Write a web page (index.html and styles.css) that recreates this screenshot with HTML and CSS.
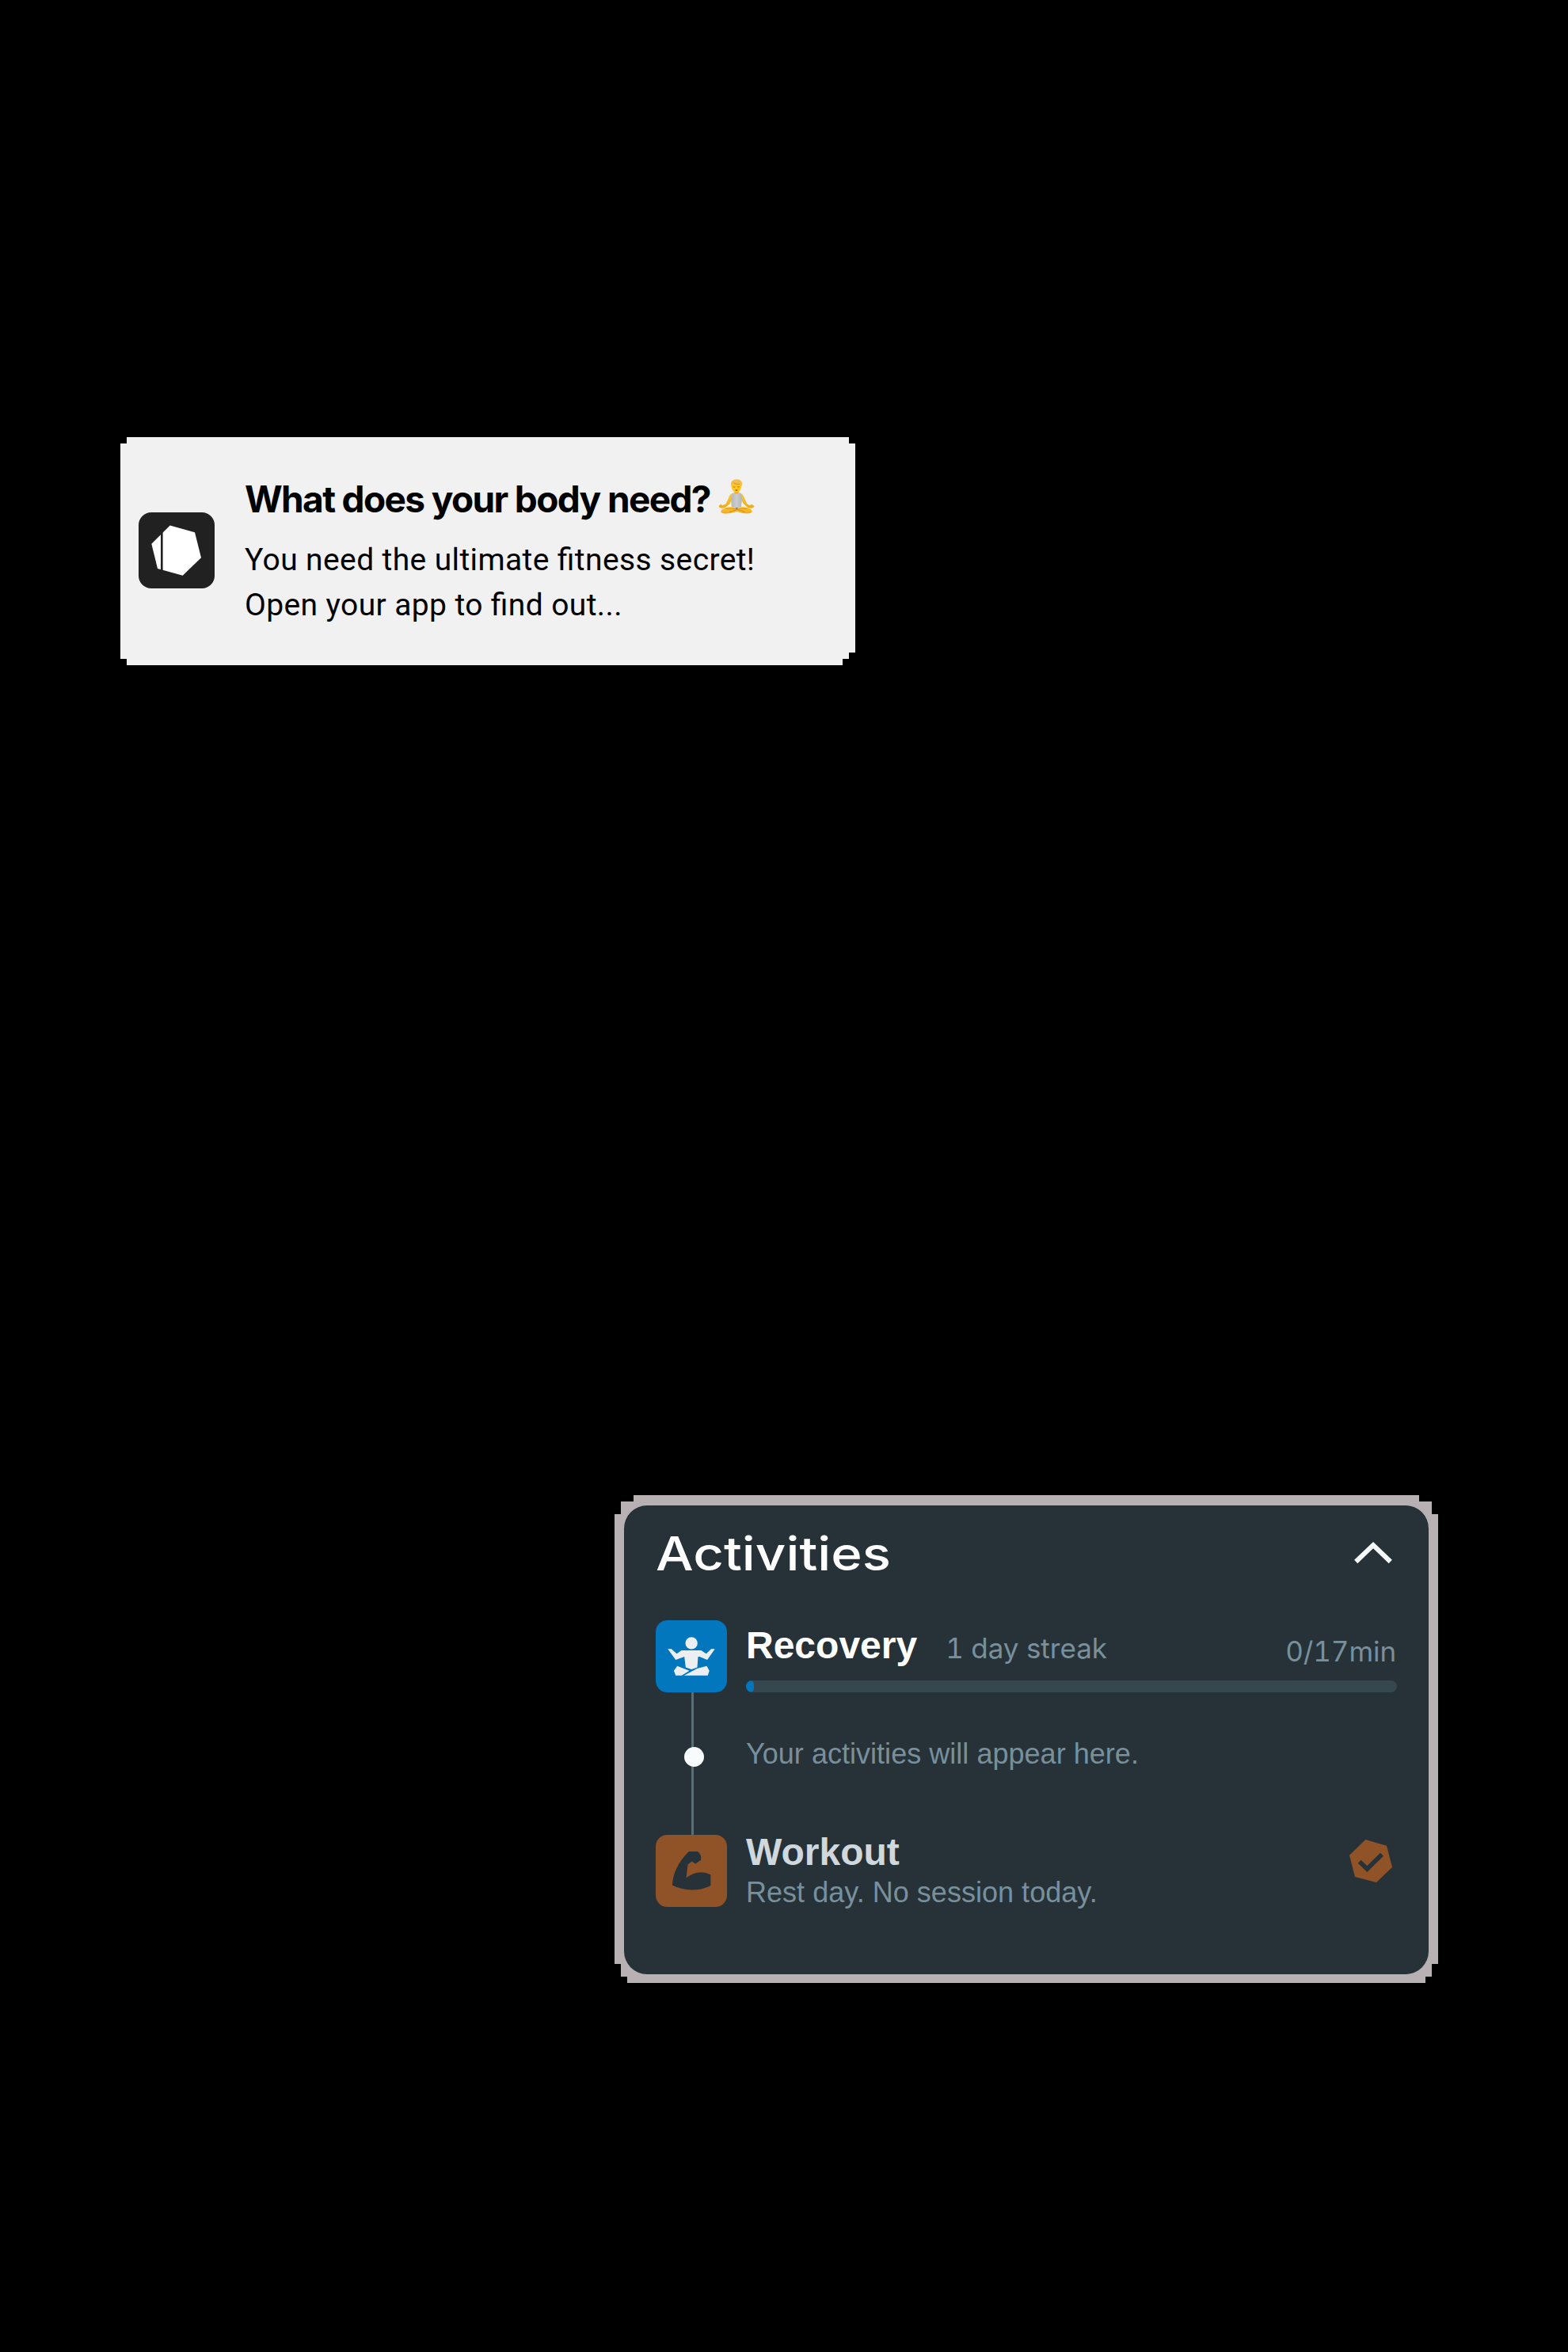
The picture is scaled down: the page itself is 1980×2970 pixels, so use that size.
FILE: index.html
```html
<!DOCTYPE html>
<html lang="en">
<head>
<meta charset="utf-8">
<title>Activities</title>
<link rel="stylesheet" href="styles.css">
</head>
<body>
<main class="page">
  <section class="notice">
    <svg class="app-icon" viewBox="0 0 96 96">
      <rect width="96" height="96" rx="16" fill="#212121"/>
      <path d="M39.7 16.6 71 25.3 79 57.2 55.7 79.7 24 71 16.3 39.8Z" fill="#fff"/>
      <path d="M29.3 15V78" stroke="#212121" stroke-width="2.6"/>
    </svg>
    <div class="notice-text">
      <h2 class="notice-title"><span>What does your body need?</span>
        <svg class="emoji" viewBox="48 42 138 132">
          <defs>
            <linearGradient id="skin" x1="0" y1="0" x2="0" y2="1"><stop offset="0" stop-color="#fccb35"/><stop offset="1" stop-color="#efa91c"/></linearGradient>
            <linearGradient id="shirt" x1="0" y1="0" x2="1" y2="0"><stop offset="0" stop-color="#b4b6bb"/><stop offset=".5" stop-color="#cbccd0"/><stop offset="1" stop-color="#b4b6ba"/></linearGradient>
          </defs>
          <path d="M109 84h16v14h-16z" fill="#e9a51d"/>
          <path d="M104 95C94 97 89 104 87 114L77 136 64 142 58 137 51 142 50 148 60 152 75 149 91 136 101 118H133L144 136 160 150 174 152 185 147 181 141 174 137 167 142 157 136 147 114C144 103 139 97 129 95L117 101Z" fill="url(#skin)"/>
          <path d="M101 96 109 93Q117 103 126 93L135 96 138 118 134 152H99L96 117Z" fill="url(#shirt)"/>
          <path d="M100 147C82 146 60 153 58 164 58 173 77 174 95 171L118 165 140 171C158 174 176 173 176 163 174 153 153 146 135 147L117 152Z" fill="url(#skin)"/>
          <path d="M76 154Q99 151 120 157L149 166M158 154Q133 152 119 158L89 166" fill="none" stroke="#cf8519" stroke-width="2.4"/>
          <path d="M112 151h12l-6 4z" fill="#555c66"/>
          <path d="M98 58C95 64 98 70 99 76 101 87 109 92 117 93 126 91 133 86 134 75 138 69 136 61 133 57Z" fill="#ffc61d"/>
          <path d="M97 66C93 53 102 44 117 43 134 42 142 54 137 67L132 61 119 62 104 57Z" fill="#f6be4c"/>
          <path d="M104 56Q113 62 129 61" fill="none" stroke="#b9782a" stroke-width="2"/>
          <path d="M105 71q4 3 7 0M121 71q4 3 7 0" fill="none" stroke="#76501a" stroke-width="2"/>
          <ellipse cx="117" cy="84" rx="5" ry="2.2" fill="#a94b2c"/>
        </svg>
      </h2>
      <p class="notice-body">You need the ultimate fitness secret!<br>Open your app to find out...</p>
    </div>
  </section>

  <section class="frame">
    <div class="panel">
      <header class="panel-head">
        <h1 class="panel-title">Activities</h1>
        <svg class="chevron" viewBox="0 0 48 28"><path d="M2.2 25 24 4.2 45.8 25" fill="none" stroke="#f5f9fa" stroke-width="6"/></svg>
      </header>

      <div class="row row-recovery">
        <svg class="tile" viewBox="39 34 271 271" preserveAspectRatio="none">
          <rect x="39" y="34" width="271" height="271" rx="44" fill="#0277bd"/>
          <g fill="#eceff1">
            <circle cx="175" cy="120" r="23"/>
            <path d="M85 142H99L119 160 137 147H212L231 160 250 142H264L235 183 206 171 200 171 197 211 175 219 153 211 148 171 115 183Z"/>
            <path d="M121 206 167 224 138 242H115L108 224ZM147 242 196 216 233 206 243 224 237 242Z"/>
          </g>
        </svg>
        <div class="recovery-main">
          <div class="recovery-head">
            <h2 class="name">Recovery</h2>
            <span class="streak">1 day streak</span>
            <span class="time">0/17min</span>
          </div>
          <div class="bar"><div class="bar-fill" style="width:10px"></div></div>
        </div>
      </div>

      <div class="row row-empty">
        <div class="rail"><span class="dot"></span></div>
        <p class="muted">Your activities will appear here.</p>
      </div>

      <div class="row row-workout">
        <svg class="tile" viewBox="39 36 271 272" preserveAspectRatio="none">
          <rect x="39" y="36" width="271" height="272" rx="44" fill="#905327"/>
          <path d="M165 99H199Q208 107 211 116L211 131 190 145 176 136 161 148 155 199Q180 178 211 177 230 177 248 186L248 227Q216 244 176 244 135 243 102 226 105 158 165 99Z" fill="#263238"/>
        </svg>
        <div class="workout-text">
          <h2 class="name name-dim">Workout</h2>
          <p class="muted">Rest day. No session today.</p>
        </div>
        <svg class="badge" viewBox="72 69 162 162">
          <path d="M133 69 213 92 234 173 174 231 93 210 72 128Z" fill="#905327"/>
          <path d="M110 152 139 180 195 125" fill="none" stroke="#263238" stroke-width="17"/>
        </svg>
      </div>
    </div>
  </section>
</main>
</body>
</html>
```
FILE: styles.css
```css
* { box-sizing: border-box; }
body { margin: 0; background: #000; }
h1, h2, p { margin: 0; }
svg { display: block; flex: none; }

.page { width: 1980px; height: 2970px; padding-top: 552px; background: #000; overflow: hidden; }

.notice {
  display: flex; align-items: flex-start;
  width: 928px; height: 288px; margin-left: 152px;
  background: #f1f1f1; color: #000;
  clip-path: polygon(8px 0, 920px 0, 920px 8px, 928px 8px, 928px 272px, 920px 272px, 920px 280px, 912px 280px, 912px 288px, 8px 288px, 8px 280px, 0 280px, 0 8px, 8px 8px);
}
.app-icon { width: 96px; height: 96px; margin: 95px 38px 0 23px; }
.notice-text { padding-top: 50px; }
.notice-title {
  display: flex; font: 700 46px/56px Inter, sans-serif;
  letter-spacing: -1.64px; white-space: nowrap;
}
.emoji { width: 46px; height: 44px; margin: 3px 0 0 10px; }
.notice-body {
  margin-top: 21px; font: 400 39px/57px Roboto, sans-serif;
  letter-spacing: 0.38px; font-feature-settings: "liga" 1; white-space: nowrap;
}

.frame {
  width: 1040px; height: 616px; margin: 1048px 0 0 776px; padding: 13px 12px 11px;
  background: #b7b1b4;
  clip-path: polygon(24px 0, 1016px 0, 1016px 8px, 1032px 8px, 1032px 24px, 1040px 24px, 1040px 592px, 1032px 592px, 1032px 608px, 1024px 608px, 1024px 616px, 16px 616px, 16px 608px, 8px 608px, 8px 592px, 0 592px, 0 24px, 8px 24px, 8px 8px, 24px 8px);
}
.panel { height: 100%; padding: 24px 40px 0; border-radius: 29px; background: #263238; }
.panel-head { display: flex; align-items: center; justify-content: space-between; height: 72px; margin-bottom: 49px; }
.panel-title {
  padding-top: 2px; font: 500 59px/72px Inter, sans-serif; color: #fff;
  transform: scaleX(1.14); transform-origin: left;
}
.chevron { width: 48px; height: 28px; margin-right: 6px; }

.row { display: grid; grid-template-columns: 90px 1fr auto; column-gap: 24px; }
.row-recovery { height: 91px; }
.row-empty { height: 180px; }
.row-workout { height: 91px; }
.tile { width: 90px; height: 91px; }

.name { font: 700 48px/56px "Liberation Sans", Arial, sans-serif; color: #fff; }
.recovery-head { display: flex; align-items: flex-start; height: 76px; padding-top: 4px; }
.streak, .time { font: 400 35px/40px Inter, sans-serif; font-variant-numeric: tabular-nums; color: #78909c; }
.streak { margin: 11px 0 0 36px; }
.time { margin: 15px 1px 0 auto; letter-spacing: -0.1px; }
.recovery-main { grid-column: 2 / 4; }
.bar { height: 15px; border-radius: 8px; background: #37474f; overflow: hidden; }
.bar-fill { height: 15px; border-radius: 5px; background: #0277bd; }

.rail {
  display: flex; justify-content: center; align-items: center;
  background: linear-gradient(#546e7a, #546e7a) 45px 0 / 3px 100% no-repeat;
}
.dot { width: 25px; height: 25px; margin: -18px 0 0 7px; border-radius: 50%; background: #f7fbfc; }
.muted { font: 400 36px/40px "Liberation Sans", Arial, sans-serif; letter-spacing: 0.03px; color: #78909c; white-space: nowrap; }
.row-empty .muted { padding-top: 58px; }
.name-dim { line-height: 40px; margin: 2px 0 11px; color: #cfd8dc; }
.badge { width: 54px; height: 54px; margin: 6px 6px 0 0; }
```
